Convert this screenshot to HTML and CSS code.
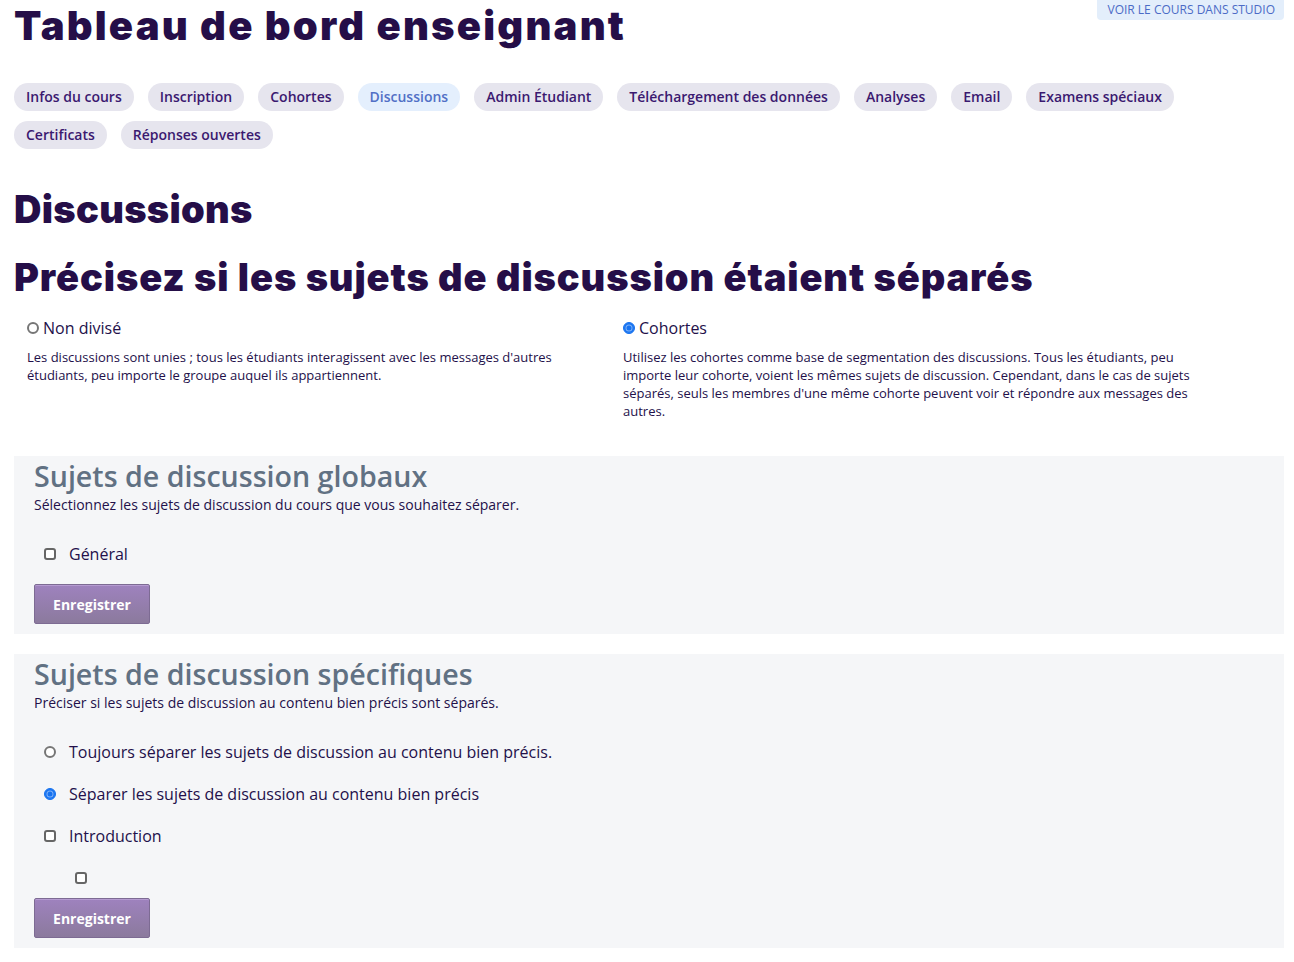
FILE: index.html
```html
<!DOCTYPE html>
<html lang="fr">
<head>
<meta charset="utf-8">
<title>Tableau de bord enseignant</title>
<link rel="stylesheet" href="styles.css">
</head>
<body>
<div class="page">
  <header class="top">
    <h1 class="title">Tableau de bord enseignant</h1>
    <a class="studio" href="#">VOIR LE COURS DANS STUDIO</a>
  </header>
  <nav class="tabs">
    <a class="tab" href="#">Infos du cours</a>
    <a class="tab" href="#">Inscription</a>
    <a class="tab" href="#">Cohortes</a>
    <a class="tab active" href="#">Discussions</a>
    <a class="tab" href="#">Admin Étudiant</a>
    <a class="tab" href="#">Téléchargement des données</a>
    <a class="tab" href="#">Analyses</a>
    <a class="tab" href="#">Email</a>
    <a class="tab" href="#">Examens spéciaux</a>
    <a class="tab" href="#">Certificats</a>
    <a class="tab" href="#">Réponses ouvertes</a>
  </nav>

  <h2 class="section-title main">Discussions</h2>
  <h2 class="section-title sub">Précisez si les sujets de discussion étaient séparés</h2>

  <div class="scheme">
    <div class="scheme-col">
      <label class="scheme-label"><span class="radio"></span>Non divisé</label>
      <p class="scheme-desc">Les discussions sont unies ; tous les étudiants interagissent avec les messages d'autres étudiants, peu importe le groupe auquel ils appartiennent.</p>
    </div>
    <div class="scheme-col">
      <label class="scheme-label"><span class="radio checked"></span>Cohortes</label>
      <p class="scheme-desc">Utilisez les cohortes comme base de segmentation des discussions. Tous les étudiants, peu importe leur cohorte, voient les mêmes sujets de discussion. Cependant, dans le cas de sujets séparés, seuls les membres d'une même cohorte peuvent voir et répondre aux messages des autres.</p>
    </div>
  </div>

  <section class="panel">
    <h3 class="panel-title">Sujets de discussion globaux</h3>
    <p class="panel-desc">Sélectionnez les sujets de discussion du cours que vous souhaitez séparer.</p>
    <div class="options">
      <label class="option"><span class="box"></span>Général</label>
    </div>
    <button class="save spaced">Enregistrer</button>
  </section>

  <section class="panel second">
    <h3 class="panel-title">Sujets de discussion spécifiques</h3>
    <p class="panel-desc">Préciser si les sujets de discussion au contenu bien précis sont séparés.</p>
    <div class="options">
      <label class="option"><span class="radio"></span>Toujours séparer les sujets de discussion au contenu bien précis.</label>
      <label class="option"><span class="radio checked"></span>Séparer les sujets de discussion au contenu bien précis</label>
      <label class="option"><span class="box"></span>Introduction</label>
      <label class="option nested"><span class="box"></span></label>
    </div>
    <button class="save">Enregistrer</button>
  </section>
</div>
</body>
</html>
```

FILE: styles.css
```css
* { box-sizing: border-box; }
html, body { margin: 0; padding: 0; background: #fff; }
body {
  font-family: "Open Sans", "Noto Sans", sans-serif;
  color: #23104a;
}
.page { padding: 0 10px 0 14px; }

.top {
  display: flex;
  justify-content: space-between;
  align-items: flex-start;
}
.title {
  margin: 2px 0 0 0;
  font-family: "Inter", "DejaVu Sans", sans-serif;
  font-weight: 900;
  font-size: 40px;
  line-height: 48px;
  color: #250e48;
  letter-spacing: 2.2px;
}
.studio {
  display: block;
  background: #e3eefb;
  color: #4b6bc6;
  font-size: 12px;
  line-height: 20px;
  padding: 0 9px 0 10px;
  border-radius: 0 0 4px 4px;
  text-decoration: none;
}

.tabs {
  display: flex;
  flex-wrap: wrap;
  gap: 10px 14px;
  margin-top: 33px;
  width: 1180px;
}
.tab {
  display: block;
  background: #e6e5ee;
  color: #3b1970;
  font-size: 14px;
  font-weight: 600;
  line-height: 28px;
  padding: 0 12px;
  border-radius: 14px;
  text-decoration: none;
}
.tab.active { background: #e4effd; color: #5270c6; }

.section-title {
  margin: 38px 0 0 0;
  font-family: "Inter", "DejaVu Sans", sans-serif;
  font-weight: 900;
  font-size: 38px;
  line-height: 44px;
  color: #250e48;
  letter-spacing: 0.9px;
}
.section-title.main { letter-spacing: 0.3px; }
.section-title.sub { margin-top: 24px; }

.scheme {
  display: grid;
  grid-template-columns: 596px 596px;
  padding-left: 13px;
  margin-top: 18px;
}
.scheme-col { padding-right: 24px; }
.scheme-label {
  display: flex;
  align-items: center;
  font-size: 16px;
  line-height: 22px;
  color: #23104a;
}
.scheme-label .radio { margin-right: 4px; }
.scheme-desc {
  margin: 9px 0 0 0;
  font-size: 13px;
  line-height: 18px;
  color: #23104a;
}

.radio {
  display: inline-block;
  width: 12px;
  height: 12px;
  border-radius: 50%;
  border: 2px solid #767676;
  background: #fff;
  flex: none;
}
.radio.checked {
  border: 1px solid #1672f0;
  background: #1672f0;
  box-shadow: inset 0 0 0 1.5px #1672f0, inset 0 0 0 2.5px #7fb2f8;
}
.box {
  display: inline-block;
  width: 12px;
  height: 12px;
  border: 2px solid #666;
  border-radius: 3px;
  background: #fff;
  flex: none;
}

.panel {
  background: #f5f6f8;
  margin-top: 36px;
  padding: 0 20px 10px 20px;
}
.panel.second { margin-top: 20px; }
.panel-title {
  margin: 0;
  font-size: 28.6px;
  font-weight: 600;
  line-height: 40px;
  color: #617183;
}
.panel-desc {
  margin: 0;
  font-size: 14px;
  line-height: 18px;
  color: #23104a;
}
.options {
  display: flex;
  flex-direction: column;
  padding-top: 19px;
  padding-left: 10px;
}
.option {
  display: flex;
  align-items: center;
  gap: 13px;
  font-size: 16px;
  line-height: 22px;
  height: 42px;
  color: #23104a;
}
.option.nested { padding-left: 31px; height: 41px; }
.save {
  display: block;
  margin-top: 0;
  height: 40px;
  width: 116px;
  border: 1px solid #7d6b93;
  border-radius: 2px;
  background: linear-gradient(#9e82be, #8b7a9d);
  color: #fff;
  font-family: "Open Sans", sans-serif;
  font-size: 14px;
  font-weight: 700;
  box-shadow: inset 0 1px 0 #b59bd1;
}
.save.spaced { margin-top: 9px; }
```
